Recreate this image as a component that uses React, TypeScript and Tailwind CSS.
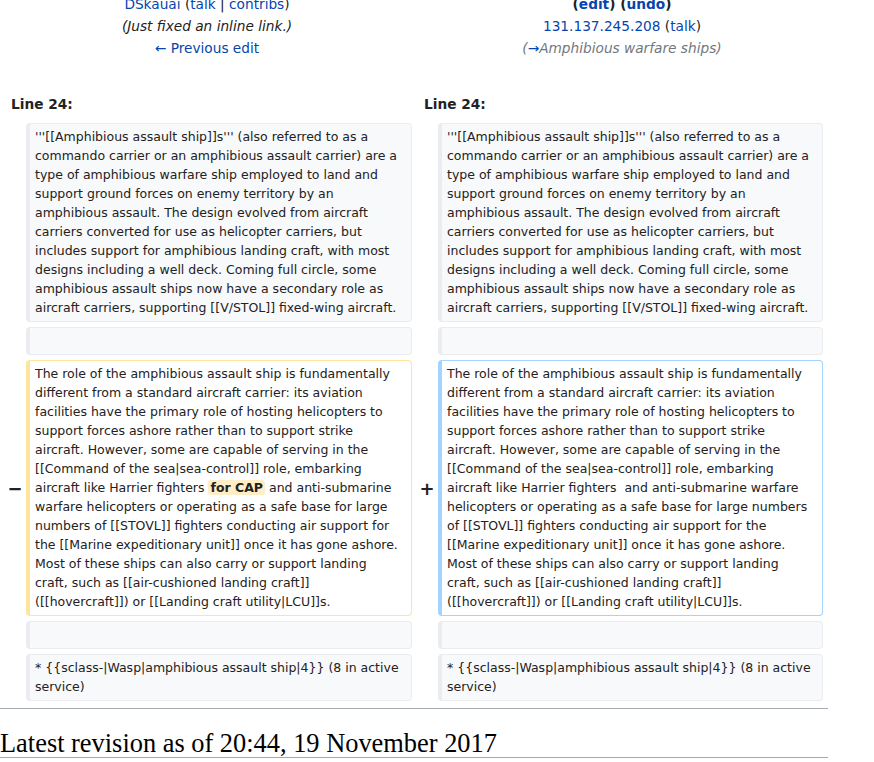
import React from 'react';

const oldLines = [
  "'''[[Amphibious assault ship]]s''' (also referred to as a",
  'commando carrier or an amphibious assault carrier) are a',
  'type of amphibious warfare ship employed to land and',
  'support ground forces on enemy territory by an',
  'amphibious assault. The design evolved from aircraft',
  'carriers converted for use as helicopter carriers, but',
  'includes support for amphibious landing craft, with most',
  'designs including a well deck. Coming full circle, some',
  'amphibious assault ships now have a secondary role as',
  'aircraft carriers, supporting [[V/STOL]] fixed-wing aircraft.',
];

const roleStart = [
  'The role of the amphibious assault ship is fundamentally',
  'different from a standard aircraft carrier: its aviation',
  'facilities have the primary role of hosting helicopters to',
  'support forces ashore rather than to support strike',
  'aircraft. However, some are capable of serving in the',
  '[[Command of the sea|sea-control]] role, embarking',
];

const addedTail = [
  'aircraft like Harrier fighters  and anti-submarine warfare',
  'helicopters or operating as a safe base for large numbers',
  'of [[STOVL]] fighters conducting air support for the',
  '[[Marine expeditionary unit]] once it has gone ashore.',
  'Most of these ships can also carry or support landing',
  'craft, such as [[air-cushioned landing craft]]',
  '([[hovercraft]]) or [[Landing craft utility|LCU]]s.',
];

const deletedTail = [
  'warfare helicopters or operating as a safe base for large',
  'numbers of [[STOVL]] fighters conducting air support for',
  'the [[Marine expeditionary unit]] once it has gone ashore.',
  'Most of these ships can also carry or support landing',
  'craft, such as [[air-cushioned landing craft]]',
  '([[hovercraft]]) or [[Landing craft utility|LCU]]s.',
];

function Lines({ lines }: { lines: string[] }) {
  return (
    <>
      {lines.map((l, i) => (
        <React.Fragment key={i}>
          {l}
          {i < lines.length - 1 && <br />}
        </React.Fragment>
      ))}
    </>
  );
}

function Box({
  kind = 'context',
  children,
}: {
  kind?: 'context' | 'deleted' | 'added';
  children?: React.ReactNode;
}) {
  const border =
    kind === 'deleted'
      ? 'border-[#ffe49c] bg-white'
      : kind === 'added'
        ? 'border-[#a3d3ff] bg-white'
        : 'border-[#eaecf0] bg-[#f8f9fa]';
  return (
    <div
      className={`min-h-[28px] whitespace-pre-wrap rounded-[4px] border border-l-4 pl-[5px] pr-2 pt-[3px] pb-[4px] text-[12.5px] leading-[19px] text-[#222] ${border}`}
    >
      {children}
    </div>
  );
}

function Marker({ sign }: { sign: string }) {
  return (
    <div className="flex items-center justify-center pl-[4px] text-[18px] font-bold text-[#222]">
      {sign}
    </div>
  );
}

export default function App() {
  return (
    <div
      className="w-[828px] bg-white text-[#222]"
      style={{ fontFamily: '"DejaVu Sans", sans-serif' }}
    >
      <div className="-mt-[7px] grid grid-cols-2 text-center text-[13.7px] leading-[22px]">
        <div>
          <div>
            <a className="text-[#0645ad]">DSkauai</a> (<a className="text-[#0645ad]">talk</a> |{' '}
            <a className="text-[#0645ad]">contribs</a>)
          </div>
          <div className="italic">(Just fixed an inline link.)</div>
          <div>
            <a className="text-[#0645ad]">← Previous edit</a>
          </div>
        </div>
        <div className="pl-[2px]">
          <div className="font-bold">
            (<a className="text-[#0645ad]">edit</a>) (<a className="text-[#0645ad]">undo</a>)
          </div>
          <div>
            <a className="text-[#0645ad]">131.137.245.208</a> (<a className="text-[#0645ad]">talk</a>)
          </div>
          <div className="italic text-[#72777d]">
            (<a className="text-[#0645ad]">→</a>Amphibious warfare ships)
          </div>
        </div>
      </div>

      <div className="mt-[34px] grid grid-cols-2 text-[13.7px] font-bold leading-[22px]">
        <div className="pl-[11px]">Line 24:</div>
        <div className="pl-[10px]">Line 24:</div>
      </div>

      <div className="mt-[8px] grid grid-cols-[26px_386px_26px_385px] gap-y-[5px]">
        <div />
        <Box>
          <Lines lines={oldLines} />
        </Box>
        <div />
        <Box>
          <Lines lines={oldLines} />
        </Box>

        <div />
        <Box />
        <div />
        <Box />

        <Marker sign="−" />
        <Box kind="deleted">
          <Lines lines={roleStart} />
          <br />
          aircraft like Harrier fighters{' '}
          <span className="rounded-[3px] bg-[#feeec8] px-[2px] font-bold">for CAP</span> and
          anti-submarine
          <br />
          <Lines lines={deletedTail} />
        </Box>
        <Marker sign="+" />
        <Box kind="added">
          <Lines lines={roleStart} />
          <br />
          <Lines lines={addedTail} />
        </Box>

        <div />
        <Box />
        <div />
        <Box />

        <div />
        <Box>
          {'* {{sclass-|Wasp|amphibious assault ship|4}} (8 in active'}
          <br />
          service)
        </Box>
        <div />
        <Box>
          {'* {{sclass-|Wasp|amphibious assault ship|4}} (8 in active'}
          <br />
          service)
        </Box>
      </div>

      <div className="mt-[7px] border-t border-[#a2a9b1]" />

      <h2
        className="mt-[21px] border-b border-[#a2a9b1] text-[26.4px] leading-[27px] text-black"
        style={{ fontFamily: '"Liberation Serif", serif' }}
      >
        Latest revision as of 20:44, 19 November 2017
      </h2>
    </div>
  );
}
